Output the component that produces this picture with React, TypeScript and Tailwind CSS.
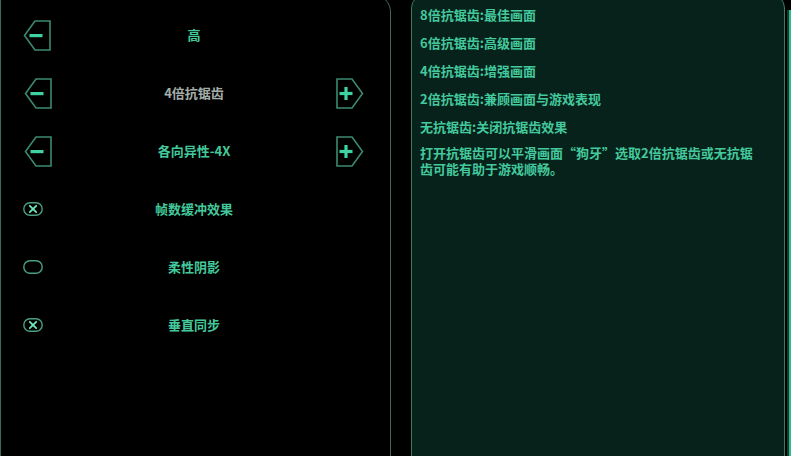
import React from "react";

const teal = "#43c99c";

function Minus() {
  return (
    <svg width="28" height="31" viewBox="0 0 28 31">
      <path d="M27 1 H12 L1.5 15.5 L12 30 H27 Z" fill="none" stroke="#3b8a70" strokeWidth="1.6" />
      <rect x="6.5" y="14" width="13" height="3.2" fill="#3fd3a2" />
    </svg>
  );
}

function Plus() {
  return (
    <svg width="28" height="31" viewBox="0 0 28 31">
      <path d="M1 1 H16 L26.5 15.5 L16 30 H1 Z" fill="none" stroke="#3b8a70" strokeWidth="1.6" />
      <rect x="3.5" y="13.9" width="13" height="3.2" fill="#3fd3a2" />
      <rect x="8.4" y="9" width="3.2" height="13" fill="#3fd3a2" />
    </svg>
  );
}

function Toggle({ on }: { on: boolean }) {
  return (
    <svg width="20" height="14" viewBox="0 0 20 14">
      <rect x="0.8" y="0.8" width="18.4" height="12.4" rx="6.2" fill="none" stroke="#4a9e84" strokeWidth="1.4" />
      {on && (
        <g stroke="#6fe3bd" strokeWidth="1.8" strokeLinecap="round">
          <line x1="6.8" y1="3.8" x2="13.2" y2="10.2" />
          <line x1="13.2" y1="3.8" x2="6.8" y2="10.2" />
        </g>
      )}
    </svg>
  );
}

type Row = { left: React.ReactNode; right?: React.ReactNode; text: string; gray?: boolean };

export default function App() {
  const rows: Row[] = [
    { left: <Minus />, text: "高" },
    { left: <Minus />, right: <Plus />, text: "4倍抗锯齿", gray: true },
    { left: <Minus />, right: <Plus />, text: "各向异性-4X" },
    { left: <Toggle on />, text: "帧数缓冲效果" },
    { left: <Toggle on={false} />, text: "柔性阴影" },
    { left: <Toggle on />, text: "垂直同步" },
  ];
  const lines = [
    "8倍抗锯齿:最佳画面",
    "6倍抗锯齿:高级画面",
    "4倍抗锯齿:增强画面",
    "2倍抗锯齿:兼顾画面与游戏表现",
    "无抗锯齿:关闭抗锯齿效果",
  ];
  return (
    <div
      className="w-[791px] h-[456px] bg-black overflow-hidden flex"
      style={{ fontFamily: '"Noto Sans CJK SC", "Noto Sans", sans-serif' }}
    >
      <div className="w-[391px] h-[470px] -mt-[6px] border-[1.5px] border-[#3d6a5c] rounded-tr-[18px] pt-[11px] flex flex-col shrink-0">
        {rows.map((r, i) => (
          <div key={i} className="h-[58px] grid grid-cols-[28px_1fr_28px] items-center pl-[23px] pr-[26px]">
            <div className={r.right ? "flex items-center" : "flex items-center -ml-[1px]"}>{r.left}</div>
            <div
              className="text-center text-[13px] font-semibold"
              style={{ color: r.gray ? "#a3aea8" : teal }}
            >
              {r.text}
            </div>
            <div className="flex items-center">{r.right}</div>
          </div>
        ))}
      </div>
      <div className="w-[20px] shrink-0" />
      <div className="w-[374px] h-[470px] -mt-[6px] shrink-0 bg-[#07211b] border-[1.5px] border-[#3b7a66] rounded-t-[14px] pt-[6px] pl-[8px] text-[13px] font-semibold" style={{ color: teal }}>
        {lines.map((l, i) => (
          <div key={i} className="leading-[28px]">{l}</div>
        ))}
        <div className="leading-[16px] pt-[4px]">
          <div>打开抗锯齿可以平滑画面“狗牙”选取2倍抗锯齿或无抗锯</div>
          <div>齿可能有助于游戏顺畅。</div>
        </div>
      </div>
      <div className="w-[2px] shrink-0" />
      <div className="flex-1 mt-[10px] border-l-[2px] border-[#173a30] bg-[#2bbd90]" />
    </div>
  );
}
